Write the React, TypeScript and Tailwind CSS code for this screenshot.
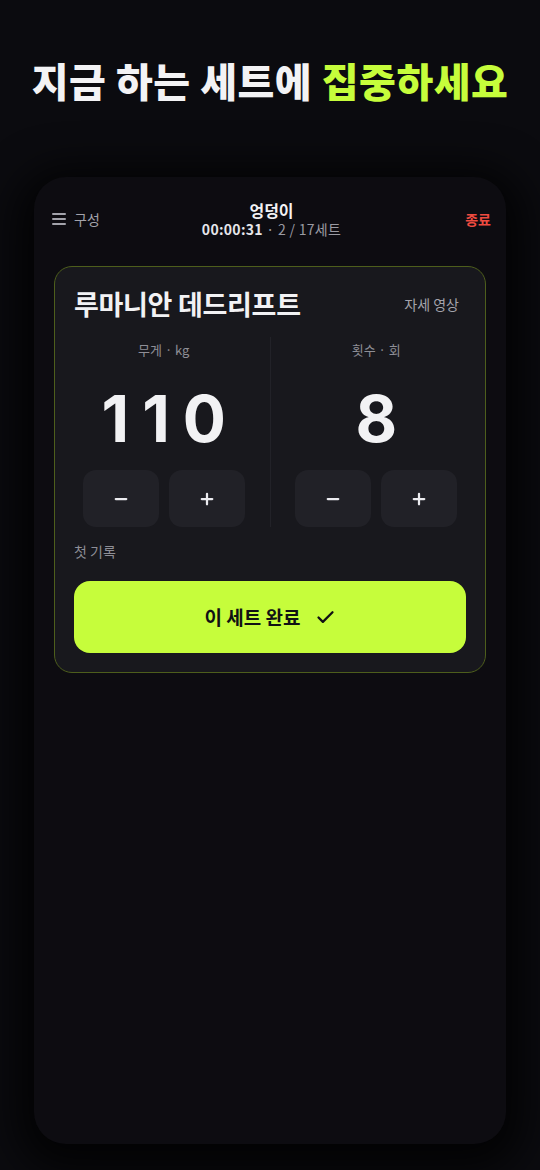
import { Check, Minus, Plus } from 'lucide-react';

const KR = "font-['Noto_Sans_CJK_KR',_'Noto_Sans',_sans-serif]";

function Stepper({ label, value }: { label: string; value: string }) {
  return (
    <div className="flex-1 flex flex-col items-center">
      <div className="text-[13px] text-[#8e8e96] leading-none mt-[6px]">{label}</div>
      <div className="mt-[31px] text-[64px] leading-[63px] font-bold text-[#f2f2f4] tracking-[13px] font-['Inter',_sans-serif] pl-[13px]">
        {value}
      </div>
      <div className="mt-[20px] flex gap-[10px]">
        <button className="w-[76px] h-[57px] rounded-[13px] bg-[#212127] flex items-center justify-center text-[#ececf0]">
          <Minus size={18} strokeWidth={3} />
        </button>
        <button className="w-[76px] h-[57px] rounded-[13px] bg-[#212127] flex items-center justify-center text-[#ececf0]">
          <Plus size={18} strokeWidth={3} />
        </button>
      </div>
    </div>
  );
}

export default function App() {
  return (
    <div className={`${KR} w-[540px] h-[1170px] bg-[#0b0b0f] overflow-hidden flex flex-col items-center`}>
      <h1 className="mt-[54px] text-[40px] font-black leading-[52px] tracking-[0.5px] text-[#f3f3f5]">
        지금 하는 세트에 <span className="text-[#c6fd3b]">집중하세요</span>
      </h1>

      <div className="mt-[71px] w-[472px] h-[967px] rounded-[32px] bg-[#0d0c11] shadow-[0_10px_40px_18px_rgba(0,0,0,0.75)] flex flex-col pl-[18px] pr-[15px]">
        {/* top bar */}
        <div className="mt-[22px] grid grid-cols-[1fr_auto_1fr] items-center h-[40px]">
          <div className="flex items-center gap-[8px] text-[#a3a3ab] text-[14px]">
            <div className="flex flex-col gap-[3px] w-[14px]">
              <span className="h-[2px] bg-[#a3a3ab] rounded" />
              <span className="h-[2px] bg-[#a3a3ab] rounded" />
              <span className="h-[2px] bg-[#a3a3ab] rounded" />
            </div>
            <span>구성</span>
          </div>
          <div className="flex flex-col items-center leading-none">
            <div className="text-[16px] font-bold text-[#f2f2f4]">엉덩이</div>
            <div className="mt-[4px] text-[14px] text-[#9a9aa2] tracking-[0.3px]">
              <span className="font-bold text-[#e6e6ea]">00:00:31</span> · 2 / 17세트
            </div>
          </div>
          <div className="justify-self-end text-[14px] font-semibold text-[#ee4b40]">종료</div>
        </div>

        {/* exercise card */}
        <div className="mt-[27px] ml-[2px] mr-[5px] rounded-[18px] border border-[#4d5e1c] bg-[#18181d] px-[19px] pt-[20px] pb-[19px]">
          <div className="flex items-center justify-between">
            <div className="text-[27px] font-bold text-[#f2f2f4] leading-[34px] tracking-[-0.3px]">루마니안 데드리프트</div>
            <div className="text-[14px] text-[#a3a3ab] pr-[7px]">자세 영상</div>
          </div>

          <div className="-mx-[16px] mt-[16px] flex">
            <Stepper label="무게 · kg" value="110" />
            <div className="w-px bg-[#222228]" />
            <Stepper label="횟수 · 회" value="8" />
          </div>

          <div className="mt-[17px] text-[14px] text-[#8e8e96] leading-none">첫 기록</div>

          <button className="mt-[23px] w-full h-[72px] rounded-[16px] bg-[#c6fd3b] flex items-center justify-center gap-[14px] text-[#111114]">
            <span className="text-[19px] font-bold">이 세트 완료</span>
            <Check size={21} strokeWidth={2.6} />
          </button>
        </div>
      </div>
    </div>
  );
}
